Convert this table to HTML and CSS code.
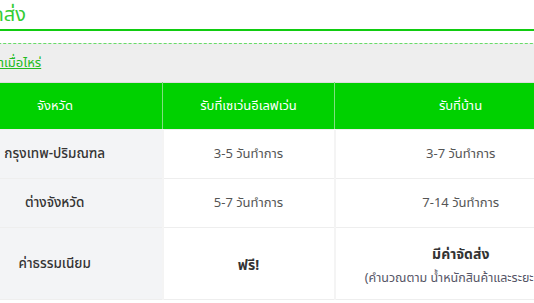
FILE: index.html
```html
<!DOCTYPE html>
<html lang="th">
<head>
<meta charset="utf-8">
<link rel="stylesheet" href="styles.css">
</head>
<body>
<div class="page">
  <h2 class="title">การจัดส่ง</h2>
  <div class="faq"><a href="#" class="faq-link">จะได้รับสินค้าเมื่อไหร่</a></div>
  <table class="ship">
    <thead>
      <tr>
        <th class="c1">จังหวัด</th>
        <th class="c2">รับที่เซเว่นอีเลฟเว่น</th>
        <th class="c3">รับที่บ้าน</th>
      </tr>
    </thead>
    <tbody>
      <tr>
        <td class="label">กรุงเทพ-ปริมณฑล</td>
        <td>3-5 วันทำการ</td>
        <td>3-7 วันทำการ</td>
      </tr>
      <tr>
        <td class="label">ต่างจังหวัด</td>
        <td>5-7 วันทำการ</td>
        <td>7-14 วันทำการ</td>
      </tr>
      <tr class="fee">
        <td class="label">ค่าธรรมเนียม</td>
        <td><strong>ฟรี!</strong></td>
        <td><strong>มีค่าจัดส่ง</strong><br><span class="note">(คำนวณตาม น้ำหนักสินค้าและระยะทาง)</span></td>
      </tr>
    </tbody>
  </table>
</div>
</body>
</html>
```

FILE: styles.css
```css
html, body {
  margin: 0;
  padding: 0;
  background: #ffffff;
}
body {
  font-family: "Noto Sans", "Noto Sans Thai", "Tahoma", sans-serif;
  overflow: hidden;
}
.page {
  margin-left: -52px;
  width: 640px;
}
.title {
  margin: 0;
  padding: 2px 0 0 3px;
  height: 27px;
  font-size: 20px;
  font-weight: normal;
  line-height: 24px;
  color: #33cc33;
  border-bottom: 2px solid #11cc11;
}
.faq {
  margin-top: 12px;
  border-top: 1px dashed #66dd66;
  background: #eeeeee;
  height: 38px;
  padding: 0;
  display: flex;
  align-items: center;
}
.faq-link {
  margin-left: -10px;
  color: #22bb22;
  font-size: 13px;
  text-decoration: underline;
}
.ship {
  border-collapse: collapse;
  width: 638px;
  font-size: 13px;
  border-top: 1px solid #dddddd;
}
.ship th {
  background: #00d100;
  color: #ffffff;
  font-weight: normal;
  font-size: 13px;
  height: 46px;
  padding: 0;
  text-align: center;
  border-left: 1px solid #7fe07f;
}
.ship th.c1 { border-left: none; width: 214px; }
.ship th.c2 { width: 171px; }
.ship td {
  text-align: center;
  color: #555555;
  height: 48px;
  padding: 0;
  border-top: 1px solid #eeeeee;
  border-left: 2px solid #f4f4f4;
  border-bottom: 1px solid #eeeeee;
}
.ship td.label {
  background: #f3f4f6;
  color: #333333;
  font-size: 13.5px;
  font-weight: 500;
  border-left: none;
}
.ship tr.fee td {
  height: 71px;
}
.ship strong {
  color: #333333;
  font-size: 14px;
  font-weight: bold;
}
.ship tr.fee strong {
  display: inline-block;
  margin-top: 4px;
}
.note {
  display: inline-block;
  margin-top: 4px;
  color: #555566;
  font-size: 12.5px;
}
```
